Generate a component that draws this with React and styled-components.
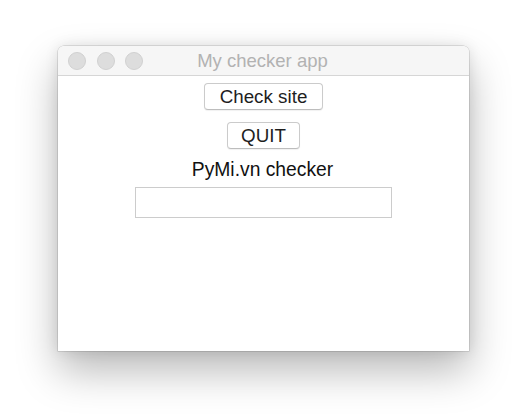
import React from "react";
import styled, { createGlobalStyle } from "styled-components";

const Global = createGlobalStyle`
  html, body { margin: 0; padding: 0; background: #ffffff; }
  body { font-family: "Liberation Sans", Arial, sans-serif; }
`;

const Desktop = styled.div`
  width: 527px;
  height: 420px;
  box-sizing: border-box;
  padding: 46px 0 0 58px;
  background: #ffffff;
  overflow: hidden;
`;

const Window = styled.div`
  width: 411px;
  height: 305px;
  display: flex;
  flex-direction: column;
  background: #ffffff;
  border-radius: 6px 6px 0 0;
  box-shadow: 0 0 0 0.5px rgba(0, 0, 0, 0.2), 0 20px 42px rgba(0, 0, 0, 0.28),
    0 0 14px rgba(0, 0, 0, 0.1);
  overflow: hidden;
`;

const TitleBar = styled.div`
  position: relative;
  height: 29px;
  flex: none;
  display: flex;
  align-items: center;
  justify-content: center;
  background: #f6f6f6;
  border-bottom: 1px solid #d6d6d6;
`;

const Lights = styled.div`
  position: absolute;
  left: 10px;
  top: 6px;
  display: flex;
  gap: 10.5px;
`;

const Light = styled.span`
  width: 16px;
  height: 16px;
  border-radius: 50%;
  background: #dddddd;
  border: 0.5px solid #d0d0d0;
`;

const Title = styled.div`
  font-size: 18.5px;
  line-height: 22px;
  color: #b2b2b2;
  margin-top: 1px;
  margin-left: -2px;
`;

const Content = styled.div`
  flex: 1;
  display: flex;
  flex-direction: column;
  align-items: center;
  padding-top: 7px;
`;

const Button = styled.button`
  box-sizing: border-box;
  height: 27px;
  width: ${(p) => p.$w}px;
  margin-bottom: ${(p) => p.$mb}px;
  padding: 0;
  background: #ffffff;
  border: 1px solid #cbcbcb;
  border-bottom-color: #bdbdbd;
  border-radius: 4px;
  box-shadow: 0 1px 1px rgba(0, 0, 0, 0.06);
  font-family: "Liberation Sans", Arial, sans-serif;
  font-size: 18.8px;
  color: #1e1e1e;
  line-height: 25px;
`;

const Label = styled.div`
  font-size: 19.3px;
  line-height: 22px;
  color: #111111;
  margin-bottom: 6px;
  margin-left: -2px;
`;

const Entry = styled.div`
  box-sizing: border-box;
  width: 257px;
  height: 31px;
  border: 1px solid #cccccc;
  background: #ffffff;
`;

export default function App() {
  return (
    <>
      <Global />
      <Desktop>
        <Window>
          <TitleBar>
            <Lights>
              <Light />
              <Light />
              <Light />
            </Lights>
            <Title>My checker app</Title>
          </TitleBar>
          <Content>
            <Button $w={119} $mb={12}>Check site</Button>
            <Button $w={73} $mb={10}>QUIT</Button>
            <Label>PyMi.vn checker</Label>
            <Entry />
          </Content>
        </Window>
      </Desktop>
    </>
  );
}
